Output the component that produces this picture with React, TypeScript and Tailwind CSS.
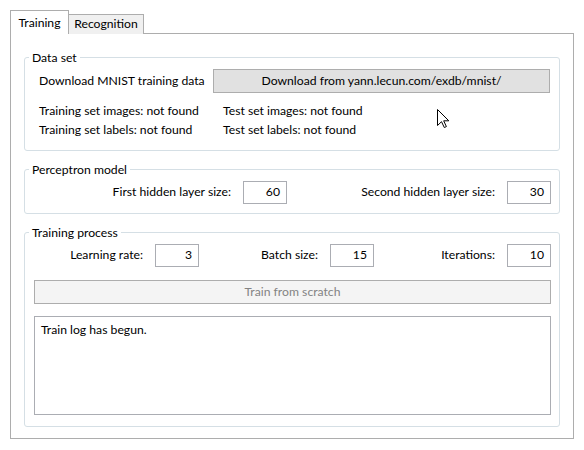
import React from "react";

// small numeric box, right aligned like a WinForms NumericUpDown without arrows
function NumBox({ value }: { value: string }) {
    return (
        <div className="w-[44px] h-[23px] border border-[#abadb3] bg-white flex items-center justify-end pr-[6px]">
            {value}
        </div>
    );
}

function Field({ label, value, width }: { label: string; value: string; width: string }) {
    return (
        <div className={`flex items-center justify-end gap-[12px] ${width}`}>
            <span className="whitespace-nowrap">{label}</span>
            <NumBox value={value} />
        </div>
    );
}

function Group({ title, children, className }: { title: string; children: React.ReactNode; className?: string }) {
    return (
        <fieldset className={`border border-[#d5dfe5] rounded-[3px] pl-[9px] pr-[8px] ${className ?? ""}`}>
            <legend className="-ml-[5px] px-[3px] leading-[15px]">{title}</legend>
            {children}
        </fieldset>
    );
}

export default function App() {
    return (
        <div
            className="relative w-[584px] h-[450px] bg-white pt-[10px] pl-[10px] text-[12.2px] text-black"
            style={{ fontFamily: "Lato, 'Noto Sans', sans-serif" }}
        >
            {/* tabs */}
            <div className="flex items-end h-[24px] relative z-10">
                <div className="h-[24px] w-[59px] bg-white border border-b-0 border-[#adadad] flex items-center justify-center pt-[1px]">
                    Training
                </div>
                <div className="h-[20px] w-[75px] bg-[#f0f0f0] border border-l-0 border-b-0 border-[#adadad] flex items-center justify-center">
                    Recognition
                </div>
            </div>

            {/* tab page */}
            <div className="w-[564px] h-[406px] -mt-px border border-[#adadad] bg-white pt-[16px] pl-[13px] pr-[13px] flex flex-col">
                <Group title="Data set" className="h-[101px]">
                    <div className="flex items-center mt-[4px] h-[24px]">
                        <span className="w-[179px] pl-[5px] whitespace-nowrap">Download MNIST training data</span>
                        <button className="w-[337px] h-[24px] bg-[#e1e1e1] border border-[#adadad]">
                            Download from yann.lecun.com/exdb/mnist/
                        </button>
                    </div>
                    <div className="flex items-center h-[19px] mt-[9px]">
                        <span className="w-[189px] pl-[5px] whitespace-nowrap">Training set images: not found</span>
                        <span>Test set images: not found</span>
                    </div>
                    <div className="flex items-center h-[19px]">
                        <span className="w-[189px] pl-[5px] whitespace-nowrap">Training set labels: not found</span>
                        <span>Test set labels: not found</span>
                    </div>
                </Group>

                <Group title="Perceptron model" className="h-[52px] mt-[11px]">
                    <div className="flex items-center mt-[4px]">
                        <Field label="First hidden layer size:" value="60" width="w-[253px]" />
                        <Field label="Second hidden layer size:" value="30" width="flex-1" />
                    </div>
                </Group>

                <Group title="Training process" className="h-[202px] mt-[11px]">
                    <div className="flex items-center mt-[4px]">
                        <Field label="Learning rate:" value="3" width="w-[165px]" />
                        <Field label="Batch size:" value="15" width="w-[175px]" />
                        <Field label="Iterations:" value="10" width="flex-1" />
                    </div>
                    <button className="w-full h-[24px] mt-[13px] bg-[#f4f4f4] border border-[#adadad] text-[#838383]">
                        Train from scratch
                    </button>
                    <div className="w-full h-[99px] mt-[12px] border border-[#abadb3] bg-white px-[6px] pt-[4px]">
                        Train log has begun.
                    </div>
                </Group>
            </div>

            {/* mouse pointer captured in the screenshot */}
            <svg className="absolute left-[437px] top-[109px]" width="13" height="20" viewBox="0 0 13 20">
                <path
                    d="M0.5 0.5 L0.5 16.5 L4.5 12.7 L7.3 18.5 L9.4 17.6 L6.7 11.8 L11.8 11.8 Z"
                    fill="white"
                    stroke="black"
                    strokeWidth="1"
                    strokeLinejoin="miter"
                />
            </svg>
        </div>
    );
}
